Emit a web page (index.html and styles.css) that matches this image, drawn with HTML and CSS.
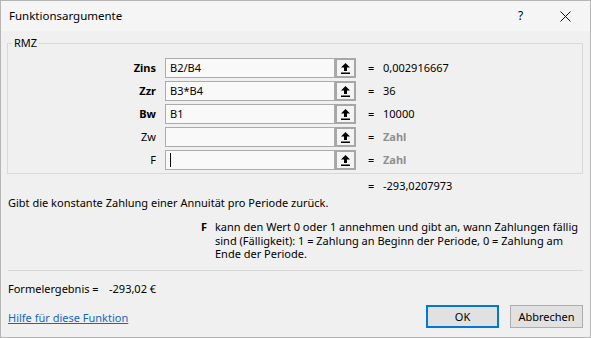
FILE: index.html
```html
<!DOCTYPE html>
<html lang="de">
<head>
<meta charset="utf-8">
<title>Funktionsargumente</title>
<link rel="stylesheet" href="styles.css">
</head>
<body>
<div class="window">
  <div class="titlebar">
    <span class="title">Funktionsargumente</span>
    <span class="help">?</span>
    <span class="close"><svg width="11" height="11" viewBox="0 0 11 11"><path d="M0.5 0.5 L10.5 10.5 M10.5 0.5 L0.5 10.5" stroke="#111" stroke-width="1" fill="none"/></svg></span>
  </div>
  <div class="content">
    <fieldset class="group">
      <legend>RMZ</legend>
      <div class="args">
        <div class="arg">
          <span class="name bold">Zins</span>
          <div class="field">B2/B4</div>
          <span class="ref"><svg width="9" height="11" viewBox="0 0 9 11"><path d="M4.5 0 L9 4.5 L6 4.5 L6 8 L3 8 L3 4.5 L0 4.5 Z M0 9.5 H9 V11 H0 Z" fill="#000"/></svg></span>
          <span class="eq">=</span>
          <span class="val">0,002916667</span>
        </div>
        <div class="arg">
          <span class="name bold">Zzr</span>
          <div class="field">B3*B4</div>
          <span class="ref"><svg width="9" height="11" viewBox="0 0 9 11"><path d="M4.5 0 L9 4.5 L6 4.5 L6 8 L3 8 L3 4.5 L0 4.5 Z M0 9.5 H9 V11 H0 Z" fill="#000"/></svg></span>
          <span class="eq">=</span>
          <span class="val">36</span>
        </div>
        <div class="arg">
          <span class="name bold">Bw</span>
          <div class="field">B1</div>
          <span class="ref"><svg width="9" height="11" viewBox="0 0 9 11"><path d="M4.5 0 L9 4.5 L6 4.5 L6 8 L3 8 L3 4.5 L0 4.5 Z M0 9.5 H9 V11 H0 Z" fill="#000"/></svg></span>
          <span class="eq">=</span>
          <span class="val">10000</span>
        </div>
        <div class="arg">
          <span class="name">Zw</span>
          <div class="field"></div>
          <span class="ref"><svg width="9" height="11" viewBox="0 0 9 11"><path d="M4.5 0 L9 4.5 L6 4.5 L6 8 L3 8 L3 4.5 L0 4.5 Z M0 9.5 H9 V11 H0 Z" fill="#000"/></svg></span>
          <span class="eq">=</span>
          <span class="val hint">Zahl</span>
        </div>
        <div class="arg">
          <span class="name">F</span>
          <div class="field"><span class="caret"></span></div>
          <span class="ref"><svg width="9" height="11" viewBox="0 0 9 11"><path d="M4.5 0 L9 4.5 L6 4.5 L6 8 L3 8 L3 4.5 L0 4.5 Z M0 9.5 H9 V11 H0 Z" fill="#000"/></svg></span>
          <span class="eq">=</span>
          <span class="val hint">Zahl</span>
        </div>
      </div>
    </fieldset>
    <div class="result"><span class="eq">=</span><span class="val">-293,0207973</span></div>
    <p class="desc">Gibt die konstante Zahlung einer Annuität pro Periode zurück.</p>
    <div class="argdesc">
      <span class="argname">F</span>
      <p class="argtext">kann den Wert 0 oder 1 annehmen und gibt an, wann Zahlungen fällig<br>sind (Fälligkeit): 1 = Zahlung an Beginn der Periode, 0 = Zahlung am<br>Ende der Periode.</p>
    </div>
    <div class="sep"></div>
    <div class="footer">
      <div class="footleft">
        <div class="formula"><span class="flabel">Formelergebnis =</span><span class="fval">-293,02 €</span></div>
        <a class="helplink" href="#">Hilfe für diese Funktion</a>
      </div>
      <div class="buttons">
        <button class="btn primary">OK</button>
        <button class="btn">Abbrechen</button>
      </div>
    </div>
  </div>
</div>
</body>
</html>
```

FILE: styles.css
```css
* { box-sizing: border-box; }
html, body { margin: 0; padding: 0; }
body {
  font-family: "Noto Sans", "Open Sans", sans-serif;
  font-size: 11px;
  color: #000;
  background: #ffffff;
}
.window {
  width: 591px;
  height: 338px;
  border: 1px solid #b5b5b5;
  background: #f0f0f0;
  display: flex;
  flex-direction: column;
  overflow: hidden;
}
.titlebar {
  height: 30px;
  flex: none;
  background: #f5f5f5;
  display: flex;
  align-items: center;
  padding-left: 8px;
}
.title { flex: 1; font-size: 11.5px; line-height: 16px; }
.help { width: 10px; margin-right: 32px; font-size: 12px; line-height: 16px; }
.close { width: 11px; height: 11px; margin-right: 19px; display: flex; }
.content {
  padding: 0 7px 0 6px;
  display: flex;
  flex-direction: column;
}
.group {
  margin: 5px 0 0 0;
  padding: 8px 0 3px 0;
  border: 1px solid #d9d9d9;
  min-width: 0;
}
.group legend {
  margin-left: 4px;
  padding: 0 2px;
  line-height: 14px;
  height: 14px;
}
.args { display: flex; flex-direction: column; gap: 3px; }
.arg {
  display: grid;
  grid-template-columns: 157px 170px 21px 27px 1fr;
  height: 20px;
  align-items: center;
  line-height: 14px;
}
.name { text-align: right; padding-right: 9px; }
.bold { font-weight: bold; }
.field {
  height: 20px;
  border: 1px solid #acacac;
  background: #f9f9f9;
  padding: 2px 4px;
  line-height: 14px;
  display: flex;
  align-items: center;
}
.caret { display: block; width: 1px; height: 14px; background: #000; }
.ref {
  height: 20px;
  border: 2px solid #a7a7a7;
  background: #f4f4f4;
  display: flex;
  align-items: center;
  justify-content: center;
}
.eq { padding-left: 12px; }
.hint { color: #8f8f8f; font-weight: bold; }
.result {
  margin-top: 5px;
  height: 14px;
  line-height: 14px;
  display: flex;
  padding-left: 349px;
}
.result .eq { width: 27px; flex: none; }
.desc { margin: 3px 0 0 1px; height: 14px; line-height: 14px; white-space: nowrap; }
.argdesc {
  margin-top: 10px;
  display: flex;
  padding-left: 194px;
  line-height: 13.5px;
  white-space: nowrap;
}
.argname { width: 14px; flex: none; font-weight: bold; }
.argtext { margin: 0; }
.sep {
  margin-top: 9px;
  margin-left: 1px;
  height: 1px;
  flex: none;
  background: #d8d8d8;
}
.footer {
  display: flex;
  justify-content: space-between;
  padding-top: 11px;
  padding-left: 1px;
}
.footleft { display: flex; flex-direction: column; margin-bottom: 3px; flex: none; }
.formula { height: 14px; line-height: 14px; display: flex; }
.flabel { width: 101px; flex: none; }
.helplink {
  margin-top: 15px;
  height: 14px;
  line-height: 14px;
  color: #1666c0;
  text-decoration: underline;
}
.buttons { display: flex; gap: 11px; align-self: flex-end; margin-right: 0; }
.btn {
  width: 73px;
  height: 23px;
  font-family: inherit;
  font-size: 11px;
  background: #e1e1e1;
  border: 1px solid #adadad;
  color: #000;
  padding: 0;
  margin: 0;
}
.btn.primary { border: 2px solid #0078d7; }
```
